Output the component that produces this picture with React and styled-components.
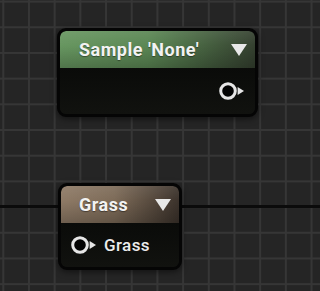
import React from "react";
import styled, { createGlobalStyle } from "styled-components";

const GlobalStyle = createGlobalStyle`
  html, body {
    margin: 0;
    padding: 0;
    background: #262626;
  }
  body {
    font-family: Roboto, "Liberation Sans", sans-serif;
  }
`;

// graph canvas with the grid and the dark axis line
const Canvas = styled.div`
  position: relative;
  width: 320px;
  height: 291px;
  overflow: hidden;
  background-color: #252525;
  background-image:
    linear-gradient(to bottom, transparent 205px, #0b0b0b 205px, #0b0b0b 208px, transparent 208px),
    linear-gradient(to right, #363636 2px, transparent 2px),
    linear-gradient(to bottom, #363636 2px, transparent 2px);
  background-size: 100% 100%, 25.7px 25.7px, 25.7px 25.7px;
  background-position: 0 0, 2.3px 0, 0 0.6px;
  background-repeat: no-repeat, repeat, repeat;
`;

const Node = styled.div`
  position: absolute;
  left: ${p => p.$x}px;
  top: ${p => p.$y}px;
  width: ${p => p.$w}px;
  border: 3px solid #050505;
  border-radius: 9px;
  background: #0d0e0c;
  box-shadow: 0 2px 6px rgba(0, 0, 0, 0.5);
  overflow: hidden;
  box-sizing: border-box;
`;

const Header = styled.div`
  display: flex;
  align-items: center;
  height: 37px;
  padding: 0 8px 0 ${p => p.$padLeft}px;
  border-radius: 6px 6px 0 0;
  background:
    linear-gradient(to bottom, rgba(255, 255, 255, 0.08) 0%, rgba(255, 255, 255, 0) 40%, rgba(0, 0, 0, 0.22) 100%),
    linear-gradient(to right, ${p => p.$from} 0%, ${p => p.$mid} 45%, ${p => p.$to} 100%);
`;

const Title = styled.span`
  color: #f2f2f2;
  font-weight: 700;
  font-size: 18px;
  letter-spacing: 0.5px;
  white-space: nowrap;
  text-shadow: 0 1px 1px rgba(0, 0, 0, 0.4);
`;

const Caret = styled.span`
  margin-left: auto;
  width: 0;
  height: 0;
  border-left: 8px solid transparent;
  border-right: 8px solid transparent;
  border-top: 12px solid #e8e8e8;
`;

const Body = styled.div`
  display: flex;
  align-items: center;
  justify-content: ${p => (p.$out ? "flex-end" : "flex-start")};
  height: ${p => p.$h}px;
  padding: 0 10px 0 10px;
  background: linear-gradient(to bottom, #0a0b09, #11120f);
`;

const PinRow = styled.div`
  display: flex;
  align-items: center;
  gap: 7px;
`;

const PinLabel = styled.span`
  color: #ececec;
  font-size: 17px;
  font-weight: 500;
  letter-spacing: 0.4px;
`;

function Pin() {
  return (
    <svg width="26" height="20" viewBox="0 0 26 20">
      <circle cx="9" cy="10" r="7.3" fill="#030303" stroke="#e6e6e6" strokeWidth="3" />
      <polygon points="18.6,6 25,10 18.6,14" fill="#e6e6e6" />
    </svg>
  );
}

export default function App() {
  return (
    <>
      <GlobalStyle />
      <Canvas>
        <Node $x={57} $y={28} $w={201}>
          <Header $padLeft={19} $from="#679660" $mid="#5b8754" $to="#34402f">
            <Title>Sample 'None'</Title>
            <Caret />
          </Header>
          <Body $out $h={46}>
            <Pin />
          </Body>
        </Node>

        <Node $x={58} $y={183} $w={124}>
          <Header $padLeft={18} $from="#8e7a66" $mid="#7d6b58" $to="#3b322b">
            <Title>Grass</Title>
            <Caret />
          </Header>
          <Body $h={44}>
            <PinRow>
              <Pin />
              <PinLabel>Grass</PinLabel>
            </PinRow>
          </Body>
        </Node>
      </Canvas>
    </>
  );
}
